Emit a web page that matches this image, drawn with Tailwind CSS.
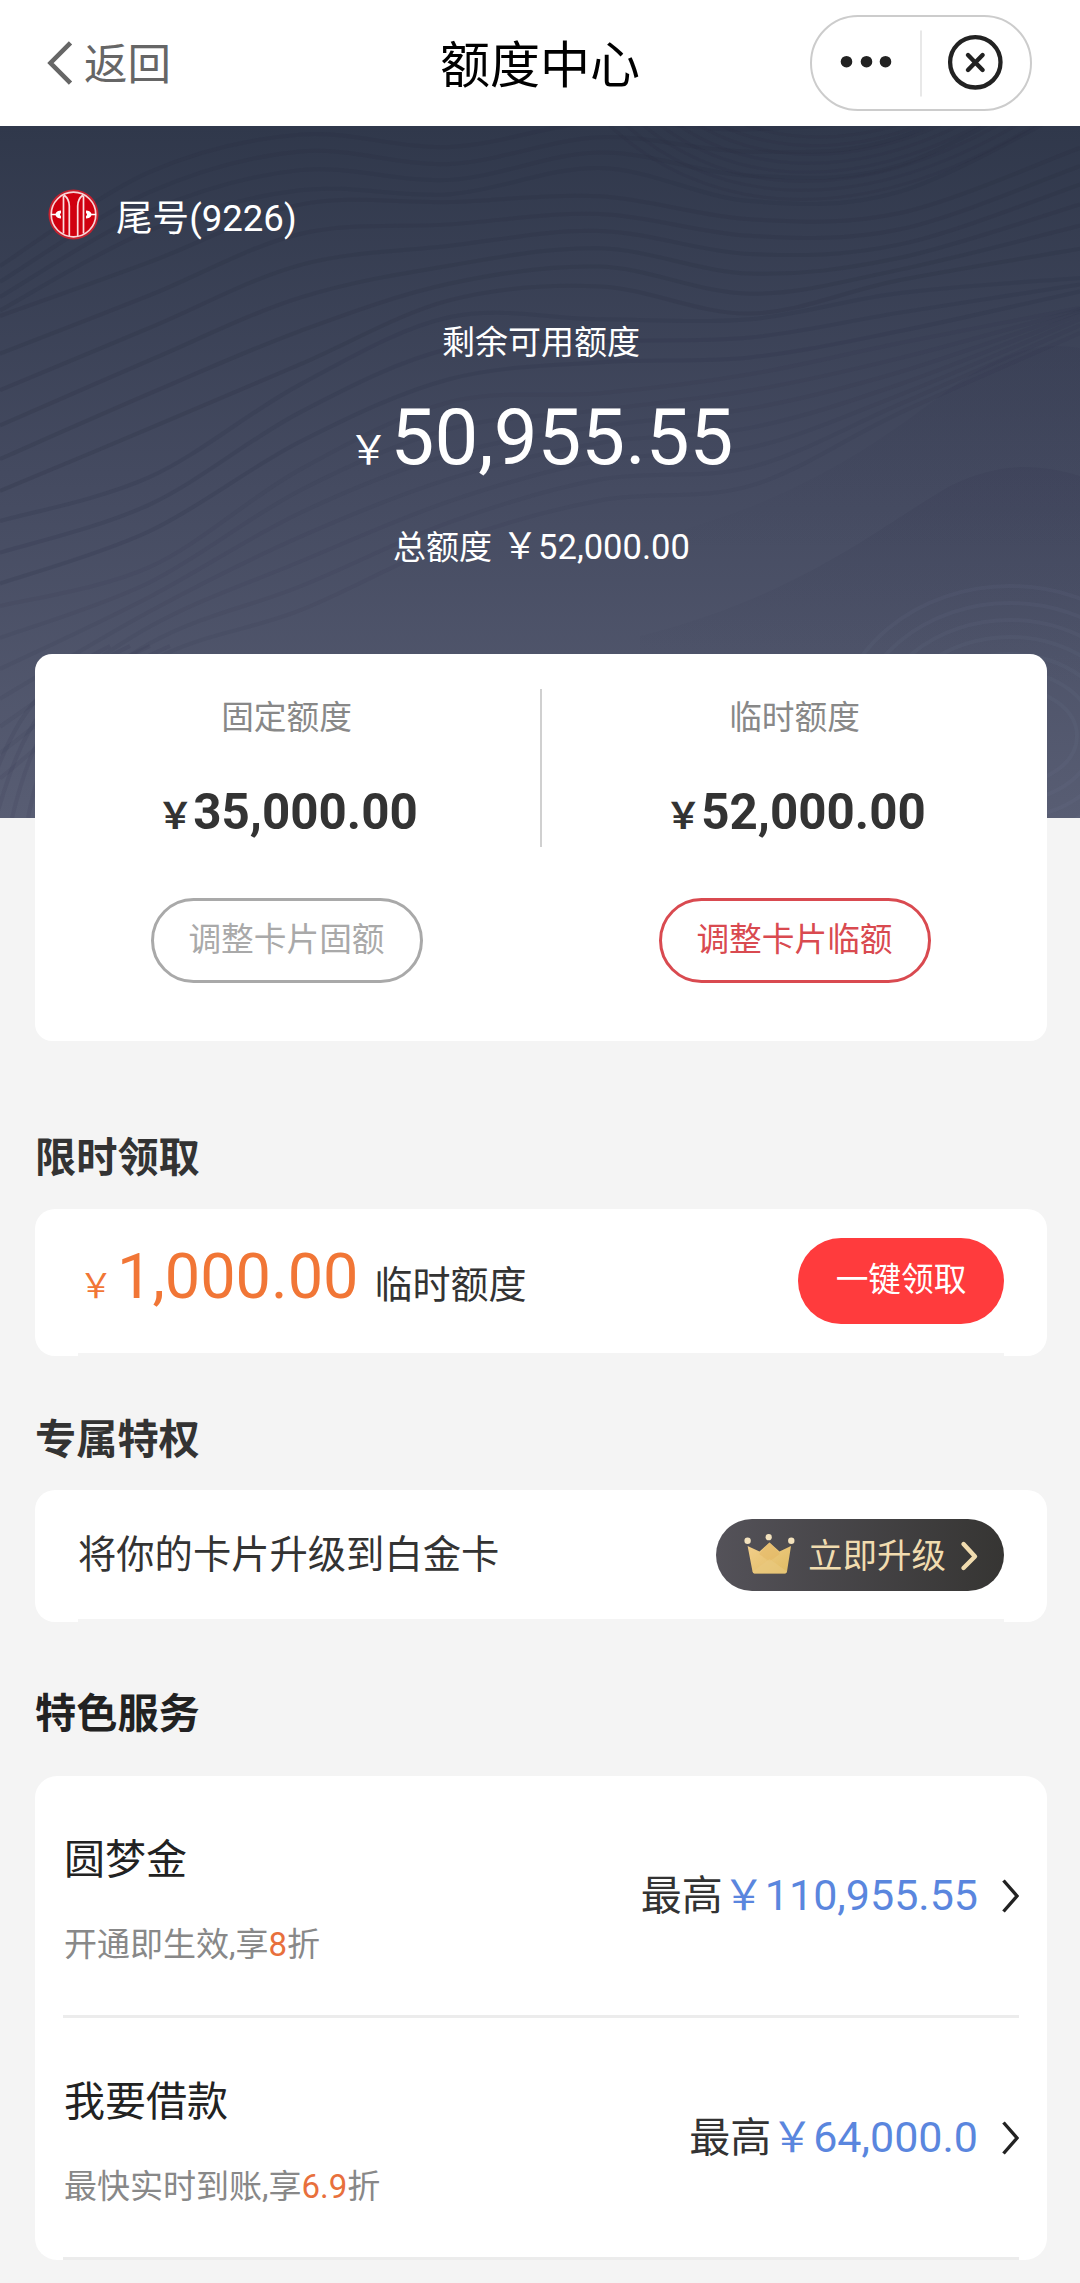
<!DOCTYPE html>
<html lang="zh-CN">
<head>
<meta charset="utf-8">
<title>额度中心</title>
<script src="https://cdn.jsdelivr.net/npm/@tailwindcss/browser@4"></script>
</head>
<body class="bg-[#f4f4f4]">
<div class="w-[1080px] h-[2283px] overflow-hidden bg-[#f4f4f4] font-['Roboto','Noto_Sans_CJK_SC',sans-serif] text-[33px] text-[#333]">

  <!-- Navigation bar -->
  <header class="h-[126px] bg-white grid grid-cols-[1fr_auto_1fr] items-center">
    <div class="flex items-center pl-[46px] pt-1 text-[#666]">
      <svg class="w-[27px] h-[44px] -mt-1" viewBox="0 0 27 44" fill="none" stroke="#666" stroke-width="4.6"><path d="M24.5 1.8 4.5 22l20 20.200"/></svg>
      <span class="ml-[11px] mt-[2px] text-[43.500px] leading-[50px]">返回</span>
    </div>
    <h1 class="text-[50px] leading-[60px] text-black pt-[5px]">额度中心</h1>
    <div class="ml-auto mr-[48px] w-[222px] h-[96px] rounded-full border-2 border-[#ccc] flex items-center">
      <svg class="w-[218px] h-[92px]" viewBox="812 17 218 92" fill="none">
        <g fill="#222"><circle cx="846.500" cy="61.700" r="5.800"/><circle cx="866.500" cy="61.700" r="5.800"/><circle cx="885.500" cy="61.700" r="5.800"/></g>
        <path d="M921 30.500v66" stroke="#e8e8e8" stroke-width="2"/>
        <circle cx="975.300" cy="62.300" r="25.200" stroke="#222" stroke-width="4.300"/>
        <path d="m968 55 14.600 15m0-15-14.600 15" stroke="#222" stroke-width="4.400" stroke-linecap="round"/>
      </svg>
    </div>
  </header>

  <!-- Available limit -->
  <section class="relative h-[692px] overflow-hidden bg-linear-to-b from-[#30384b] via-[#444a60] to-[#585d73] text-white">
    <svg class="absolute inset-0 w-[1080px] h-[692px]" viewBox="0 0 1080 692" fill="none">
      <defs>
        <linearGradient id="ridge" x1="0" y1="0" x2="0" y2="1"><stop offset="0" stop-color="#363a52" stop-opacity=".26"/><stop offset="1" stop-color="#363a52" stop-opacity="0"/></linearGradient>
      </defs>
      <path d="M560 430C760 400 860 330 940 270C1000 225 1040 215 1080 222V420H560z" fill="url(#ridge)"/>
      <path d="M640 510C800 470 880 400 950 360C1000 335 1040 338 1080 350V560H640z" fill="url(#ridge)"/>
      <g id="waves" stroke="#272c42" stroke-width="4"></g>
    </svg>
    <div class="relative pt-[58px]">
      <div class="flex items-center h-[60px] pl-[48px]">
        <svg class="w-[51px] h-[51px]" viewBox="0 0 51 51" fill="none">
          <circle cx="25.500" cy="25.500" r="25" fill="#c4202e"/>
          <circle cx="25.500" cy="25.500" r="22.300" fill="#d0000f" stroke="#f8d5d7" stroke-width="1.700"/>
          <g stroke="#fbdcde" stroke-width="1.700">
            <path d="M15.500 6.500v38M35.500 6.500v38M16 6q5.300 4 5.300 11v30M35 6q-5.300 4-5.300 11v30"/>
          </g>
          <g fill="#fff"><path d="M3 24.700H7.500Q9 21.500 13 21.500V24Q11 25.500 13 27.200V29.500Q9 29.500 7.500 26.300H3zM48 24.700H43.500Q42 21.500 38 21.500V24Q40 25.500 38 27.200V29.500Q42 29.500 43.500 26.300H48z"/></g>
        </svg>
        <span class="ml-[17px] mt-[10px] text-[36.600px] leading-[44px]">尾号(9226)</span>
      </div>
      <p class="mt-[79px] pl-[2px] text-center text-[33px] leading-[40px]">剩余可用额度</p>
      <p class="mt-[35px] pl-[2px] text-center text-[78px] leading-[80px]"><span class="mr-[2px] text-[40px]">￥</span>50,955.55</p>
      <p class="mt-[36px] pl-[3px] text-center text-[34.600px] leading-[40px]"><span class="text-[33px]">总额度<span class="ml-[10px] text-[36px]">￥</span></span>52,000.00</p>
    </div>
  </section>

  <main class="relative px-[35px] -mt-[164px]">
    <!-- Fixed / temporary limit -->
    <section class="h-[387px] w-[1012px] rounded-[17px] bg-white flex">
      <div class="w-[505px] flex flex-col items-center pt-[44px] pr-[2px]">
        <p class="text-[32.700px] leading-[40px] text-[#888]">固定额度</p>
        <p class="mt-[49px] pl-[2px] text-[49.300px] leading-[50px] font-bold"><span class="text-[36px]">￥</span>35,000.00</p>
        <button class="mt-[56px] w-[272px] h-[85px] rounded-full border-3 border-[#a9a9a9] text-[32.700px] text-[#a9a9a9]">调整卡片固额</button>
      </div>
      <div class="w-[2px] h-[158px] mt-[35px] bg-[#d0d0d0]"></div>
      <div class="w-[505px] flex flex-col items-center pt-[44px]">
        <p class="text-[32.700px] leading-[40px] text-[#888]">临时额度</p>
        <p class="mt-[49px] pl-[2px] text-[49.300px] leading-[50px] font-bold"><span class="text-[36px]">￥</span>52,000.00</p>
        <button class="mt-[56px] w-[272px] h-[85px] rounded-full border-3 border-[#d94a50] text-[32.700px] text-[#d94a50]">调整卡片临额</button>
      </div>
    </section>

    <!-- Limited-time offer -->
    <h2 class="mt-[87px] text-[41.200px] leading-[60px] font-bold">限时领取</h2>
    <section class="mt-[21px] h-[147px] w-[1012px] rounded-[20px] bg-white px-[43px]">
      <div class="h-full border-b-3 border-[#f4f4f4] flex items-center justify-between">
        <p class="pl-px text-[63px] leading-[80px] text-[#f17636]"><span class="mr-[4px] text-[34px]">￥</span>1,000.00<span class="ml-[16px] text-[38px] text-[#333]">临时额度</span></p>
        <button class="w-[206px] h-[86px] rounded-full bg-[#ff3b3d] text-[32.700px] text-white">一键领取</button>
      </div>
    </section>

    <!-- Exclusive privileges -->
    <h2 class="mt-[54px] text-[41.200px] leading-[60px] font-bold">专属特权</h2>
    <section class="mt-[20px] h-[132px] w-[1012px] rounded-[20px] bg-white px-[43px]">
      <div class="h-full border-b-3 border-[#f4f4f4] flex items-center justify-between">
        <p class="text-[38.300px] leading-[50px]">将你的卡片升级到白金卡</p>
        <button class="w-[288px] h-[72px] rounded-full bg-linear-to-r from-[#545259] to-[#363533] flex items-center pl-[28px] text-[#f1dcaf]">
          <svg class="w-[51px] h-[42px]" viewBox="0 0 51 42">
            <defs><linearGradient id="gold" x1="0" y1="0" x2="1" y2="1"><stop offset="0" stop-color="#f3cf8c"/><stop offset="1" stop-color="#dfbb62"/></linearGradient></defs>
            <path d="M3.600 12 15.500 17.500 25.500 8.500 35.500 17.500 47 12 43 37.500Q42.500 39.500 41 39.500H10.500Q9 39.500 8.500 37.500z" fill="url(#gold)"/>
            <path d="M25.500 8.500 36 20 25.500 27.500 15 20z" fill="#e3b35f" opacity=".45"/>
            <path d="M8.500 37.500 25.500 25 43 37.500Q42.500 39.500 41 39.500H10.500Q9 39.500 8.500 37.500z" fill="#e9c980" opacity=".6"/>
            <g fill="#f3e2bd"><circle cx="3.600" cy="6.800" r="3.200"/><circle cx="24.700" cy="3.200" r="3.100"/><circle cx="47.300" cy="6.800" r="3.200"/></g>
          </svg>
          <span class="ml-[13px] mt-[2px] text-[34.500px] leading-[44px]">立即升级</span>
          <svg class="ml-[14px] mt-[2px] w-[19px] h-[32px]" viewBox="0 0 19 32" fill="none" stroke="#f1dcaf" stroke-width="4.400" stroke-linecap="round" stroke-linejoin="round"><path d="M3.500 4 15 16.500 3.500 28"/></svg>
        </button>
      </div>
    </section>

    <!-- Featured services -->
    <h2 class="mt-[62px] mb-[32px] text-[41.200px] leading-[60px] font-bold text-[#222]">特色服务</h2>
    <section class="h-[484px] w-[1012px] rounded-[22px] bg-white px-[28px]">
      <div class="h-[242px] border-b-3 border-[#ececec] flex items-center justify-between">
        <div class="pt-[8px] pl-px">
          <h3 class="text-[41px] leading-[50px] text-[#222]">圆梦金</h3>
          <p class="mt-[40px] text-[33px] leading-[40px] text-[#888]">开通即生效,享<span class="text-[#e8703c]">8</span>折</p>
        </div>
        <div class="flex items-center">
          <p class="text-[43px] leading-[50px] text-[#5a86de]"><span class="text-[41px] text-[#333]">最高</span><span class="text-[42px]">￥</span>110,955.55</p>
          <svg class="ml-[24px] w-[17px] h-[34px]" viewBox="0 0 17 34" fill="none" stroke="#222" stroke-width="3.400"><path d="M1.500 1.500 15 17 1.500 32.500"/></svg>
        </div>
      </div>
      <div class="h-[242px] border-b-3 border-[#ececec] flex items-center justify-between">
        <div class="pt-[8px] pl-px">
          <h3 class="text-[41px] leading-[50px] text-[#222]">我要借款</h3>
          <p class="mt-[40px] text-[33px] leading-[40px] text-[#888]">最快实时到账,享<span class="text-[#e8703c]">6.9</span>折</p>
        </div>
        <div class="flex items-center">
          <p class="text-[43px] leading-[50px] text-[#5a86de]"><span class="text-[41px] text-[#333]">最高</span><span class="text-[42px]">￥</span>64,000.0</p>
          <svg class="ml-[24px] w-[17px] h-[34px]" viewBox="0 0 17 34" fill="none" stroke="#222" stroke-width="3.400"><path d="M1.500 1.500 15 17 1.500 32.500"/></svg>
        </div>
      </div>
    </section>
  </main>
</div>

<script>
// Contour lines of the hero: in-between curves are blended from a few key curves.
const xs = [0, 150, 300, 450, 600, 750, 900, 1080];
const keys = [
  [140, 40, 15, 20, -10, 10, -20, -120],
  [190, 130, 85, 75, 65, 100, 85, 20],
  [395, 345, 265, 190, 188, 200, 165, 150],
  [480, 435, 350, 275, 262, 255, 215, 180],
  [680, 560, 500, 440, 400, 370, 300, 215]
];
const steps = [4, 6, 3, 7];
const alphas = [0.2, 0.22, 0.18, 0.08];
const curve = p => {
  let d = `M${p[0]}`;
  for (let i = 0; i < p.length - 1; i++) {
    const a = p[i - 1] || p[i], b = p[i], c = p[i + 1], e = p[i + 2] || c;
    d += `C${b[0] + (c[0] - a[0]) / 6} ${b[1] + (c[1] - a[1]) / 6} ${c[0] - (e[0] - b[0]) / 6} ${c[1] - (e[1] - b[1]) / 6} ${c[0]} ${c[1]}`;
  }
  return d;
};
let out = '';
for (let k = 0; k < keys.length - 1; k++)
  for (let s = 0; s < steps[k]; s++) {
    const t = s / steps[k];
    const pts = xs.map((x, i) => [x, keys[k][i] * (1 - t) + keys[k + 1][i] * t + 7 * Math.sin(x / 70 + s * 0.5)]);
    out += `<path d="${curve(pts)}" opacity="${alphas[k]}"/>`;
  }
// Fine bowl-shaped lines under the top right edge
for (let s = 0; s < 8; s++)
  out += `<path d="M${600 + s * 12} ${-10 - s * 4}C${700 + s * 6} ${92 - s * 11} ${860 - s * 4} ${110 - s * 12} ${1050 - s * 18} -10" stroke-width="3" opacity=".14"/>`;
for (let s = 0; s < 7; s++)
  out += `<ellipse cx="1010" cy="610" rx="${175 - s * 18}" ry="${150 - s * 17}" stroke="#8087a0" opacity=".08"/>`;
for (let s = 0; s < 4; s++)
  out += `<path d="M${s * 16 - 20} 692C${10 + s * 12} 600 ${30 + s * 16} 560 ${110 + s * 20} 520" opacity=".1"/>`;
document.getElementById('waves').innerHTML = out;
</script>
</body>
</html>
